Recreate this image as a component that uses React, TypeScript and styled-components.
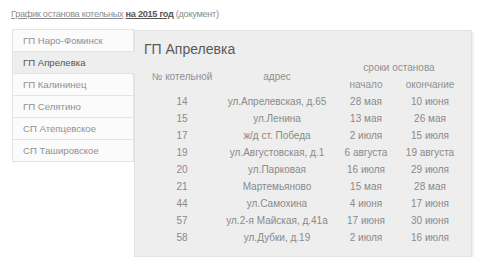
import React from "react";
import styled, { createGlobalStyle } from "styled-components";

const GlobalStyle = createGlobalStyle`
  html, body {
    margin: 0;
    padding: 0;
    background: #ffffff;
  }
  body {
    font-family: "Liberation Sans", Arial, sans-serif;
    font-size: 10px;
    color: #888;
  }
`;

const districts = [
  "ГП Наро-Фоминск",
  "ГП Апрелевка",
  "ГП Калининец",
  "ГП Селятино",
  "СП Атепцевское",
  "СП Ташировское",
];

const rows = [
  ["14", "ул.Апрелевская, д.65", "28 мая", "10 июня"],
  ["15", "ул.Ленина", "13 мая", "26 мая"],
  ["17", "ж/д ст. Победа", "2 июля", "15 июля"],
  ["19", "ул.Августовская, д.1", "6 августа", "19 августа"],
  ["20", "ул.Парковая", "16 июля", "29 июля"],
  ["21", "Мартемьяново", "15 мая", "28 мая"],
  ["44", "ул.Самохина", "4 июня", "17 июня"],
  ["57", "ул.2-я Майская, д.41а", "17 июня", "30 июня"],
  ["58", "ул.Дубки, д.19", "2 июля", "16 июля"],
];

export default function App() {
  const active = 1;
  return (
    <Page>
      <GlobalStyle />
      <Heading>
        <DocLink>График останова котельных</DocLink>{" "}
        <YearLink>на 2015 год</YearLink> (документ)
      </Heading>
      <Layout>
        <TabList>
          {districts.map((name, i) => (
            <Tab key={name} $active={i === active}>
              {name}
            </Tab>
          ))}
        </TabList>
        <Panel>
          <Title>{districts[active]}</Title>
          <Table>
            <colgroup>
              <col style={{ width: 74 }} />
              <col style={{ width: 116 }} />
              <col style={{ width: 62 }} />
              <col style={{ width: 66 }} />
            </colgroup>
            <thead>
              <tr>
                <Th rowSpan={2}>№ котельной</Th>
                <Th rowSpan={2}>адрес</Th>
                <Th colSpan={2}>сроки останова</Th>
              </tr>
              <tr>
                <Th>начало</Th>
                <Th>окончание</Th>
              </tr>
            </thead>
            <tbody>
              {rows.map((r) => (
                <tr key={r[0]}>
                  {r.map((c, j) => (
                    <Td key={j}>{c}</Td>
                  ))}
                </tr>
              ))}
            </tbody>
          </Table>
        </Panel>
      </Layout>
    </Page>
  );
}

const Page = styled.div`
  padding: 7px 8px 0 11px;
  width: 480px;
  box-sizing: border-box;
`;

const Heading = styled.div`
  font-size: 9.2px;
  letter-spacing: -0.3px;
  line-height: 14px;
  height: 14px;
  color: #8c8c8c;
  white-space: nowrap;
`;

const DocLink = styled.span`
  text-decoration: underline;
  color: #8c8c8c;
`;

const YearLink = styled.span`
  text-decoration: underline;
  font-weight: bold;
  color: #555;
`;

const Layout = styled.div`
  display: flex;
  align-items: flex-start;
  margin-top: 9px;
  margin-left: 1px;
`;

const TabList = styled.div`
  display: flex;
  flex-direction: column;
  width: 122px;
  margin-top: -1px;
`;

const Tab = styled.div<{ $active?: boolean }>`
  height: 21px;
  line-height: 21px;
  font-size: 9.6px;
  padding-left: 10px;
  margin-bottom: -1px;
  margin-right: ${(p) => (p.$active ? "-1px" : "0")};
  position: relative;
  z-index: ${(p) => (p.$active ? 2 : 0)};
  border: 1px solid #e4e4e4;
  border-right: ${(p) => (p.$active ? "1px solid #eeeeee" : "1px solid #e4e4e4")};
  background: ${(p) => (p.$active ? "#eeeeee" : "#fbfbfb")};
  color: ${(p) => (p.$active ? "#555" : "#909090")};
`;

const Panel = styled.div`
  width: 338px;
  height: 227px;
  box-sizing: border-box;
  background: #eeeeee;
  border: 1px solid #e2e2e2;
  box-shadow: 2px 2px 1px rgba(0, 0, 0, 0.05);
  padding: 9px 0 0 10px;
`;

const Title = styled.div`
  font-size: 14px;
  line-height: 18px;
  color: #5a5a5a;
  margin-left: -1px;
`;

const Table = styled.table`
  border-collapse: collapse;
  table-layout: fixed;
  width: 318px;
  margin-top: 1px;
`;

const Th = styled.th`
  font-weight: normal;
  color: #909090;
  height: 17px;
  padding: 0;
  text-align: center;
  white-space: nowrap;
`;

const Td = styled.td`
  color: #8a8a8a;
  height: 17px;
  padding: 0;
  text-align: center;
  white-space: nowrap;
`;
